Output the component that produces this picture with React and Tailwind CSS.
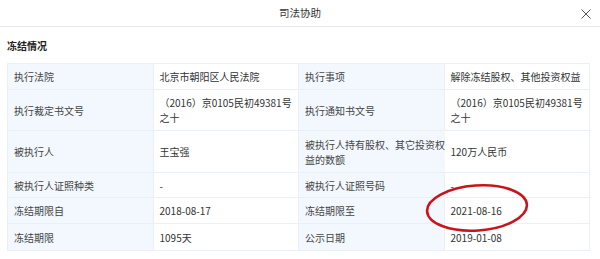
import React from 'react';

const rows = [
  { h: 'h-[26px]', cells: ['执行法院', '北京市朝阳区人民法院', '执行事项', '解除冻结股权、其他投资权益'] },
  { h: 'h-[41px]', cells: ['执行裁定书文号', ['（2016）京0105民初49381号', '之十'], '执行通知书文号', ['（2016）京0105民初49381号', '之十']] },
  { h: 'h-[42px]', cells: ['被执行人', '王宝强', ['被执行人持有股权、其它投资权', '益的数额'], '120万人民币'] },
  { h: 'h-[25px]', cells: ['被执行人证照种类', '-', '被执行人证照号码', '-'] },
  { h: 'h-[26px]', cells: ['冻结期限自', '2018-08-17', '冻结期限至', '2021-08-16'] },
  { h: 'h-[27px]', cells: ['冻结期限', '1095天', '公示日期', '2019-01-08'] },
];

function Cell({ value, label }) {
  const lines = Array.isArray(value) ? value : [value];
  return (
    <div
      className={`flex flex-col justify-center px-[6px] border-b border-r border-[#ebf0f6] leading-[15px] ${
        label ? 'bg-[#f3f8fe] text-[#444]' : 'bg-white text-[#333]'
      }`}
    >
      {lines.map((l, i) => (
        <span key={i} className="whitespace-nowrap">{l}</span>
      ))}
    </div>
  );
}

export default function App() {
  return (
    <div className="w-[600px] h-[259px] bg-white relative overflow-hidden text-[10px]" style={{ fontFamily: '"Noto Sans CJK SC", "Noto Sans", sans-serif' }}>
      {/* Header */}
      <div className="h-[27px] border-b border-[#e8e8e8] flex items-center justify-center relative">
        <span className="text-[10.5px] text-[#333]">司法协助</span>
        <svg className="absolute right-[9px] top-[9px]" width="10" height="10" viewBox="0 0 10 10">
          <path d="M0.5 0.5 L9.5 9.5 M9.5 0.5 L0.5 9.5" stroke="#555" strokeWidth="1" fill="none" />
        </svg>
      </div>

      <div className="pl-[7px] pr-[10px]">
        <div className="h-[36px] flex items-center font-bold text-[#222] text-[10px]">冻结情况</div>
        <div className="grid grid-cols-4 border-t border-l border-[#ebf0f6]">
          {rows.map((row, ri) => (
            <div key={ri} className="contents">
              {row.cells.map((c, ci) => (
                <div key={ci} className={`${row.h} grid`}>
                  <Cell value={c} label={ci % 2 === 0} />
                </div>
              ))}
            </div>
          ))}
        </div>
      </div>

      {/* red marker ellipse */}
      <svg className="absolute left-[424px] top-[182px]" width="106" height="52" viewBox="0 0 106 52">
        <ellipse cx="53" cy="26" rx="50" ry="22.5" transform="rotate(-4 53 26)" fill="none" stroke="#c8141c" strokeWidth="2.6" />
      </svg>
    </div>
  );
}
